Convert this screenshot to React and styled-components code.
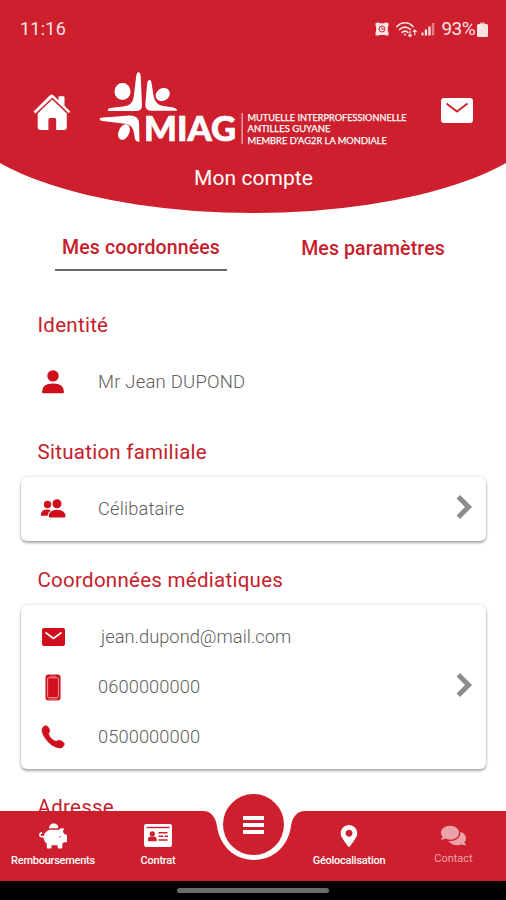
import styled, { createGlobalStyle, css } from "styled-components";
import { FaPiggyBank, FaMapMarkerAlt, FaComments } from "react-icons/fa";

const palette = {
  primary: "#cd1f2d",
  title: "#c5202b",
  icon: "#cf101c",
  white: "#ffffff",
  text: "#606060",
  arrow: "#8b8d90",
};

const GlobalStyle = createGlobalStyle`
  * { box-sizing: border-box; }
  body {
    margin: 0;
    background: ${ palette.white };
    font-family: Roboto, "Liberation Sans", sans-serif;
  }
  svg { display: block; flex-shrink: 0; }
`;

const Screen = styled.div`
  width: 506px;
  height: 900px;
  display: flex;
  flex-direction: column;
  overflow: hidden;
  background: ${ palette.white };
`;

/* ---------- header ---------- */
const Header = styled.header`
  position: relative;
  z-index: 0;
  flex: none;
  height: 213px;
  overflow: hidden;
  color: ${ palette.white };

  &::before {
    position: absolute;
    z-index: -1;
    content: "";
    top: 0;
    bottom: 0;
    left: -47px;
    width: 600px;
    border-radius: 0 0 300px 300px / 0 0 108px 108px;
    background: ${ palette.primary };
  }
`;

const StatusBar = styled.div`
  height: 58px;
  padding: 0 18px 0 20px;
  display: flex;
  align-items: center;
  font-size: 18px;
  line-height: 22px;
  color: #fbe3e4;
`;

const Clock = styled.span`
  margin-right: auto;
  letter-spacing: 0.25px;
`;

const StatusIcons = styled.div`
  display: flex;
  align-items: center;
  gap: 3px;
  margin-right: 7px;
`;

const Battery = styled.span`
  font-size: 19px;
  letter-spacing: -0.6px;
  margin-right: 2px;
`;

const BrandRow = styled.div`
  height: 108px;
  padding: 12px 33px 0 32px;
  display: flex;
  align-items: flex-start;
`;

const HomeSlot = styled.div`
  width: 66px;
  padding-top: 24px;
`;

const MailSlot = styled.div`
  margin-left: auto;
  padding-top: 28px;
`;

const PageTitle = styled.h1`
  margin: 0;
  padding-left: 1px;
  text-align: center;
  font-size: 21px;
  font-weight: 400;
  line-height: 24px;
  letter-spacing: 0.05px;
`;

/* ---------- content ---------- */
const Content = styled.main`
  flex: 1;
  min-height: 0;
  overflow: hidden;
  padding: 0 20px 0 21px;
`;

const Tabs = styled.nav`
  padding: 23px 0 0 34px;
  display: flex;
  align-items: flex-start;
`;

const Tab = styled.div`
  height: 35px;
  width: 172px;
  text-align: center;
  font-size: 19.5px;
  font-weight: 500;
  line-height: 24px;
  letter-spacing: 0.12px;
  color: ${ palette.title };

  ${ ({ $active }) => $active ? css`
    border-bottom: 2px solid #66686b;
  ` : css`
    margin-left: 60px;
    padding-top: 1px;
  ` }
`;

const SectionTitle = styled.h2`
  margin: 0;
  padding: ${ ({ $top }) => $top }px 0 0 16.5px;
  font-size: 20.5px;
  font-weight: 400;
  line-height: 24px;
  letter-spacing: 0.27px;
  color: ${ palette.title };
`;

const InfoBlock = styled.div`
  margin-top: 13px;
  display: flex;
  align-items: center;

  ${ ({ $card }) => $card && css`
    border-radius: 6px;
    background: ${ palette.white };
    box-shadow: 0 2px 3px rgba(0, 0, 0, 0.32), 0 0 3px rgba(0, 0, 0, 0.14);
  ` }
`;

const InfoList = styled.div`
  flex: 1;
  padding: ${ ({ $pad = 0 }) => $pad }px 0;
`;

const InfoRow = styled.div`
  height: ${ ({ $height = 50 }) => $height }px;
  display: flex;
  align-items: center;
`;

const IconSlot = styled.div`
  width: 64px;
  display: flex;
  justify-content: center;
  color: ${ palette.icon };
`;

const InfoText = styled.span`
  padding-left: ${ ({ $indent = 13 }) => $indent }px;
  font-size: ${ ({ $size = 18.3 }) => $size }px;
  font-weight: 300;
  line-height: 22px;
  letter-spacing: ${ ({ $spacing = 0 }) => $spacing }px;
  color: ${ palette.text };
`;

const ArrowSlot = styled.div`
  padding: 0 13px 4px 0;
`;

/* ---------- bottom bar ---------- */
const BottomBar = styled.nav`
  position: relative;
  flex: none;
  height: 70px;
  display: grid;
  grid-template-columns: 106px 104px 87px 104px 105px;
  background: ${ palette.primary };
`;

const BarItem = styled.div`
  padding-top: 11px;
  display: flex;
  flex-direction: column;
  align-items: center;
  color: ${ ({ $faded }) => $faded ? "#eba3a9" : palette.white };
`;

const BarIcon = styled.div`
  height: 27px;
  display: flex;
  align-items: center;
`;

const BarLabel = styled.span`
  margin-top: ${ ({ $faded }) => $faded ? 0 : 2 }px;
  font-size: 11px;
  font-weight: ${ ({ $faded }) => $faded ? 400 : 500 };
  line-height: 20px;
  letter-spacing: ${ ({ $spacing = 0 }) => $spacing }px;
  white-space: nowrap;
`;

const Notch = styled.div`
  position: absolute;
  top: -1px;
  left: 199px;
`;

const MenuButton = styled.div`
  position: absolute;
  top: -17px;
  left: 223px;
  width: 61px;
  height: 61px;
  border-radius: 50%;
  background: ${ palette.primary };
  display: flex;
  flex-direction: column;
  align-items: center;
  justify-content: center;
  gap: 3px;
`;

const MenuLine = styled.span`
  width: 21px;
  height: 4px;
  background: ${ palette.white };
`;

const GestureBar = styled.div`
  flex: none;
  height: 19px;
  display: flex;
  justify-content: center;
  align-items: center;
  background: #000;

  &::after {
    content: "";
    width: 152px;
    height: 5px;
    border-radius: 3px;
    background: #6b6b6b;
  }
`;

/* ---------- drawings ---------- */
const AlarmIcon = () => (
  <svg width="14" height="14" viewBox="0 0 14 14">
    <path d="M.5 1.200L3.200 .3 5 1.200h4L10.800 .3l2.700 .9v2.600l-.6 1v4.600l.6 1.200v2.600l-2.200.5-1.500-.8H4.200l-1.500.8-2.200-.5v-2.600l.6-1.200V4.800l-.6-1z" fill="currentColor" />
    <circle cx="7" cy="7" r="3" fill="none" stroke={ palette.primary } strokeWidth=".9" />
    <path d="M7 5.200v2h2" fill="none" stroke={ palette.primary } strokeWidth=".9" />
  </svg>
);

const WifiIcon = () => (
  <svg width="22" height="17" viewBox="0 0 22 17" fill="none" stroke="currentColor" strokeWidth="1.700" strokeLinecap="round">
    <path d="M1 5.500C5.500 .5 12.500 .5 17 5.500M3.600 8.500c3.200-3.300 7.600-3.300 10.800 0M6.200 11.400c1.700-1.700 3.900-1.700 5.600 0" />
    <circle cx="9" cy="13.500" r="1" fill="currentColor" stroke="none" />
    <path d="M14 10.500v5m-1.500-1.400l1.500 1.600 1.500-1.600M18.800 13.800V9.300m-1.500 1.400l1.500-1.600 1.500 1.600" strokeWidth="1.200" />
  </svg>
);

const SignalIcon = () => (
  <svg width="14" height="14" viewBox="0 0 14 14" fill="currentColor">
    <rect x="0.500" y="10.500" width="2" height="3" />
    <rect x="3.800" y="7.500" width="2.300" height="6" />
    <rect x="7.300" y="4.500" width="2.300" height="9" />
    <rect x="10.800" y="1" width="2.500" height="12.500" opacity="0.500" />
  </svg>
);

const BatteryIcon = () => (
  <svg width="11" height="15" viewBox="0 0 11 15">
    <rect x="3" y="0.500" width="5" height="2" fill="currentColor" opacity="0.700" />
    <rect x="0" y="2" width="11" height="13" rx="1.500" fill="currentColor" />
  </svg>
);

const HomeIcon = () => (
  <svg width="40" height="38" viewBox="0 0 40 38" fill="currentColor">
    <path d="M19.500 .5a2 2 0 0 1 1.500.6l5.500 5.200V3.200a1 1 0 0 1 1-1h4a1 1 0 0 1 1 1v8.600l5.800 5.600-1.600 1.900L20.400 3.400 3.400 19.400 1.600 17.400 18.200 1.100a2 2 0 0 1 1.300-.6z" />
    <path d="M20.200 5.600L34.800 19.500V33.500a2.400 2.400 0 0 1-2.400 2.400h-8.200V25.600a1.500 1.500 0 0 0-1.500-1.500h-4.800a1.500 1.500 0 0 0-1.500 1.500v10.300H8.100a2.400 2.400 0 0 1-2.400-2.400V19.500z" />
  </svg>
);

const Envelope = ({ width, height, flap, radius, line, weight }) => (
  <svg width={ width } height={ height } viewBox={ `0 0 ${width} ${height}` }>
    <rect width={ width } height={ height } rx={ radius } fill="currentColor" />
    <path d={ flap } fill="none" stroke={ line } strokeWidth={ weight } />
  </svg>
);

const Logo = () => (
  <svg width="314" height="78" viewBox="98 70 314 78" fill={ palette.white }>
    <ellipse cx="122.500" cy="91.500" rx="8" ry="8.400" />
    <ellipse cx="162.700" cy="94.500" rx="7.400" ry="6.200" transform="rotate(-32 162.700 94.500)" />
    <ellipse cx="124" cy="132" rx="5.300" ry="8.300" transform="rotate(25 124 132)" />
    <path d="M138.400 72.300q2 0 2.300 4l1.300 29q0 5.700-5.500 5.700h-28.500q-1-2.800 4-3.300l11.500-1.200q9-1 10.200-9.500l2.500-20.700q.6-4 2.200-4z" />
    <path d="M149.500 80q1.800 0 2 3l2.200 13.500q1.600 8.300 9.500 9.500l10 1.500q3.800 .7 3.800 3.300h-25q-7 0-6.700-6l1.700-20q.5-4.800 2.500-4.800z" />
    <path d="M99.500 118.800q.5-1.300 4-1.300l26.500-2q8.700 0 9 7.500l.5 18.700q-3.800 .5-4.500-3l-1.500-8q-1.500-6.200-8.500-7l-20.400-2.400q-5-.5-5.100-2.500z" />
    <text x="144" y="141" fontFamily="Lato, sans-serif" fontWeight="900" fontSize="34.500" textLength="92" lengthAdjust="spacingAndGlyphs" stroke={ palette.white } strokeWidth=".7">MIAG</text>
    <rect x="241.600" y="113" width="1" height="31" opacity=".85" />
    <g fontFamily="Lato, sans-serif" fontSize="9.800" fontWeight="400" stroke={ palette.white } strokeWidth=".25">
      <text x="247.500" y="120.500" textLength="159" lengthAdjust="spacingAndGlyphs">MUTUELLE INTERPROFESSIONNELLE</text>
      <text x="247.500" y="132.200" textLength="83" lengthAdjust="spacingAndGlyphs">ANTILLES GUYANE</text>
      <text x="247.500" y="143.900" textLength="139.500" lengthAdjust="spacingAndGlyphs">MEMBRE D'AG2R LA MONDIALE</text>
    </g>
  </svg>
);

const PersonIcon = () => (
  <svg width="24" height="24" viewBox="0 0 24 24" fill="currentColor">
    <circle cx="12" cy="5.900" r="5.700" />
    <path d="M1 22q0-8.400 11-8.400T23 22q0 1.300-1.200 1.300H2.200Q1 23.300 1 22z" />
  </svg>
);

const CoupleIcon = () => (
  <svg width="26" height="20" viewBox="0 0 26 20" fill="currentColor">
    <circle cx="7.500" cy="5.500" r="3.700" />
    <circle cx="17" cy="4.800" r="4.500" />
    <path d="M.8 15.800q.3-5.300 6.500-5.300 2.200 0 3.600.9-2.800 1.600-3.300 5.300H1.600q-.8 0-.8-.9zM8.800 17.600q0-6.800 8.300-6.800t8.300 6.800q0 .9-.9.900H9.700q-.9 0-.9-.9z" />
  </svg>
);

const MobileIcon = () => (
  <svg width="16" height="27" viewBox="0 0 16 27">
    <rect x=".5" y=".5" width="15" height="26" rx="3" fill="currentColor" />
    <rect x="2.600" y="3.800" width="10.800" height="19.800" rx="1" fill="none" stroke="#f2a3a8" strokeWidth=".9" />
    <path d="M5 2.200h6M3.500 25.200h9" stroke="#f2a3a8" strokeWidth=".7" />
  </svg>
);

const PhoneIcon = () => (
  <svg width="24" height="24" viewBox="0 0 24 24" fill="currentColor" stroke="currentColor" strokeWidth=".5">
    <path d="M1.800 2.400C3 1 5 .2 6.300 1.200c1.500 1.300 2.500 3.300 2.500 5 0 1.200-1.300 1.700-1.100 2.900.5 3 4.300 6.600 7.200 7.100 1.200.2 1.900-1.200 3-1 2 .2 4 1.300 5.100 2.700 1 1.500-.3 3.500-1.800 4.500-3.200 1.800-9.800-1.200-14-5.500C3 12.600-.8 5.500 1.800 2.400z" />
  </svg>
);

const Arrow = () => (
  <svg width="17" height="26" viewBox="0 0 17 26">
    <path d="M2.300 2.800L12.500 13 2.300 23.200" fill="none" stroke={ palette.arrow } strokeWidth="5" />
  </svg>
);

const ContractIcon = () => (
  <svg width="28" height="23" viewBox="0 0 28 23">
    <rect width="28" height="23" rx="2.200" fill="currentColor" />
    <g fill={ palette.primary }>
      <rect x="2.500" y="2.800" width="23" height="1.400" />
      <circle cx="8.300" cy="9.800" r="2.600" />
      <path d="M4 17.200v-2q0-2.700 2.500-2.700h3.600q2.500 0 2.500 2.700v2z" />
      <path d="M14.500 8h9v1.500h-9zM14.500 11.600h4.600v1.500h-4.600zM20.500 11.600h3.500v1.500h-3.500zM14.500 15.300h9v1.500h-9z" />
    </g>
  </svg>
);

const NotchShape = () => (
  <svg width="110" height="51" viewBox="0 0 110 51">
    <path d="M0 0V1H4C12 1 16.500 7 18 16C20.500 36 36 50 55 50S89.500 36 92 16C93.500 7 98 1 106 1H110V0z" fill={ palette.white } />
  </svg>
);

const contacts = [
  {
    text: "jean.dupond@mail.com",
    indent: 16,
    spacing: 0.02,
    icon: <Envelope width={ 23 } height={ 18 } radius={ 2 } flap="M3.500 4.500L11.500 10.500 19.500 4.500" line="#fff" weight={ 1.600 } />,
  },
  { text: "0600000000", spacing: 0.08, icon: <MobileIcon /> },
  { text: "0500000000", spacing: 0.08, icon: <PhoneIcon /> },
];

const App = () => (
  <>
    <GlobalStyle />
    <Screen>
      <Header>
        <StatusBar>
          <Clock>11:16</Clock>
          <StatusIcons><AlarmIcon /></StatusIcons>
          <StatusIcons><WifiIcon /><SignalIcon /></StatusIcons>
          <Battery>93%</Battery>
          <BatteryIcon />
        </StatusBar>
        <BrandRow>
          <HomeSlot><HomeIcon /></HomeSlot>
          <Logo />
          <MailSlot>
            <Envelope width={ 32 } height={ 25 } radius={ 3 } flap="M5.500 5.500L16 13.500 26.500 5.500" line={ palette.primary } weight={ 1.800 } />
          </MailSlot>
        </BrandRow>
        <PageTitle>Mon compte</PageTitle>
      </Header>

      <Content>
        <Tabs>
          <Tab $active>Mes coordonnées</Tab>
          <Tab>Mes paramètres</Tab>
        </Tabs>

        <SectionTitle $top={ 42 }>Identité</SectionTitle>
        <InfoBlock>
          <InfoRow $height={ 64 }>
            <IconSlot><PersonIcon /></IconSlot>
            <InfoText $size={ 18.5 } $spacing={ 0.2 }>Mr Jean DUPOND</InfoText>
          </InfoRow>
        </InfoBlock>

        <SectionTitle $top={ 26 }>Situation familiale</SectionTitle>
        <InfoBlock $card>
          <InfoList>
            <InfoRow $height={ 64 }>
              <IconSlot><CoupleIcon /></IconSlot>
              <InfoText $spacing={ 0.15 }>Célibataire</InfoText>
            </InfoRow>
          </InfoList>
          <ArrowSlot><Arrow /></ArrowSlot>
        </InfoBlock>

        <SectionTitle $top={ 27 }>Coordonnées médiatiques</SectionTitle>
        <InfoBlock $card>
          <InfoList $pad={ 7 }>
            { contacts.map( ({ text, icon, indent, spacing }) => (
              <InfoRow key={ text }>
                <IconSlot>{ icon }</IconSlot>
                <InfoText $indent={ indent } $spacing={ spacing }>{ text }</InfoText>
              </InfoRow>
            ))}
          </InfoList>
          <ArrowSlot><Arrow /></ArrowSlot>
        </InfoBlock>

        <SectionTitle $top={ 26 }>Adresse</SectionTitle>
      </Content>

      <BottomBar>
        <BarItem>
          <BarIcon><FaPiggyBank size={ 28 } /></BarIcon>
          <BarLabel $spacing={ -0.25 }>Remboursements</BarLabel>
        </BarItem>
        <BarItem>
          <BarIcon><ContractIcon /></BarIcon>
          <BarLabel $spacing={ -0.2 }>Contrat</BarLabel>
        </BarItem>
        <div />
        <BarItem>
          <BarIcon><FaMapMarkerAlt size={ 22 } /></BarIcon>
          <BarLabel $spacing={ -0.25 }>Géolocalisation</BarLabel>
        </BarItem>
        <BarItem $faded>
          <BarIcon><FaComments size={ 25 } /></BarIcon>
          <BarLabel $faded>Contact</BarLabel>
        </BarItem>
        <Notch><NotchShape /></Notch>
        <MenuButton>
          <MenuLine />
          <MenuLine />
          <MenuLine />
        </MenuButton>
      </BottomBar>
      <GestureBar />
    </Screen>
  </>
);

export default App;
